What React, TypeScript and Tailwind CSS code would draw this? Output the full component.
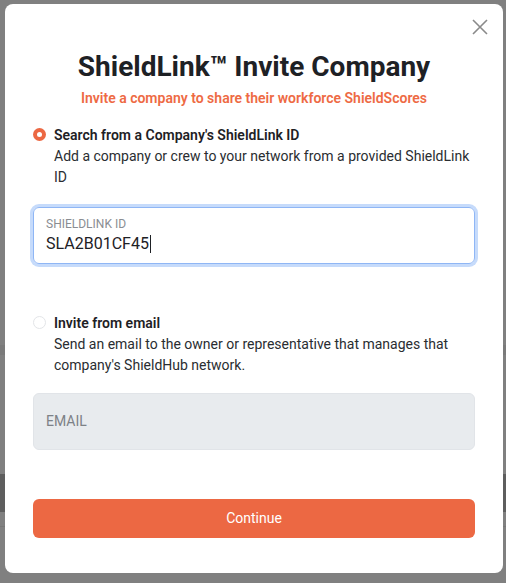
import React from "react";

function Radio({ checked }: { checked: boolean }) {
  return checked ? (
    <span className="mt-[3px] flex h-[13px] w-[13px] shrink-0 items-center justify-center rounded-full bg-[#ec6843]">
      <span className="h-[5px] w-[5px] rounded-full bg-white" />
    </span>
  ) : (
    <span className="mt-[3px] h-[13px] w-[13px] shrink-0 rounded-full border border-[#e3e5e8] bg-white" />
  );
}

export default function App() {
  return (
    <div
      className="relative h-[583px] w-[506px] overflow-hidden bg-[#808080]"
      style={{ fontFamily: "Roboto, 'Liberation Sans', sans-serif" }}
    >
      {/* faint page behind the overlay */}
      <div className="absolute left-0 top-[345px] h-[10px] w-[506px] bg-[#7a7a7a]" />
      <div className="absolute left-0 top-[474px] h-[38px] w-[506px] bg-[#5e5e5e]" />
      <div className="absolute left-0 top-[526px] h-px w-[506px] bg-[#777]" />

      <div className="absolute left-[5px] top-[4px] h-[569px] w-[498px] rounded-[8px] bg-white px-[28px]">
        <button className="absolute right-[14px] top-[14px] text-[#8a8a8a]">
          <svg width="18" height="18" viewBox="0 0 18 18" fill="none" stroke="currentColor" strokeWidth="1.6">
            <path d="M2 2 L16 16 M16 2 L2 16" />
          </svg>
        </button>

        <h1 className="pt-[45px] text-center text-[28px] font-bold leading-[36px] text-[#1e2125]">
          ShieldLink™ Invite Company
        </h1>
        <p className="mt-[3px] text-center text-[14px] font-semibold leading-[20px] text-[#ee6a44]">
          Invite a company to share their workforce ShieldScores
        </p>

        <div className="mt-[17px] flex gap-[8px]">
          <Radio checked />
          <div>
            <div className="text-[14px] font-semibold leading-[20px] text-[#1e2125]">
              Search from a Company's ShieldLink ID
            </div>
            <div className="mt-px text-[14px] leading-[21px] text-[#2a2d31]">
              Add a company or crew to your network from a provided ShieldLink ID
            </div>
          </div>
        </div>

        <div className="mt-[19px] h-[57px] rounded-[6px] border border-[#8fb6f5] px-[12px] pt-[9px] shadow-[0_0_0_3px_#c6dbfb]">
          <div className="text-[12px] leading-[14px] text-[#8a8d92]">SHIELDLINK ID</div>
          <div className="mt-[3px] flex items-center text-[16px] leading-[20px] text-[#1e2125]">
            SLA2B01CF45
            <span className="ml-px h-[18px] w-px bg-[#1e2125]" />
          </div>
        </div>

        <div className="mt-[49px] flex gap-[8px]">
          <Radio checked={false} />
          <div>
            <div className="text-[14px] font-semibold leading-[20px] text-[#1e2125]">Invite from email</div>
            <div className="mt-px text-[14px] leading-[21px] text-[#2a2d31]">
              Send an email to the owner or representative that manages that company's ShieldHub network.
            </div>
          </div>
        </div>

        <div className="mt-[17px] flex h-[57px] items-center rounded-[6px] border border-[#e1e4e8] bg-[#e8ebee] px-[12px]">
          <span className="text-[14px] text-[#7d8187]">EMAIL</span>
        </div>

        <button className="mt-[49px] flex h-[39px] w-full items-center justify-center rounded-[6px] bg-[#ec6843] text-[14px] text-white">
          Continue
        </button>
      </div>
    </div>
  );
}
